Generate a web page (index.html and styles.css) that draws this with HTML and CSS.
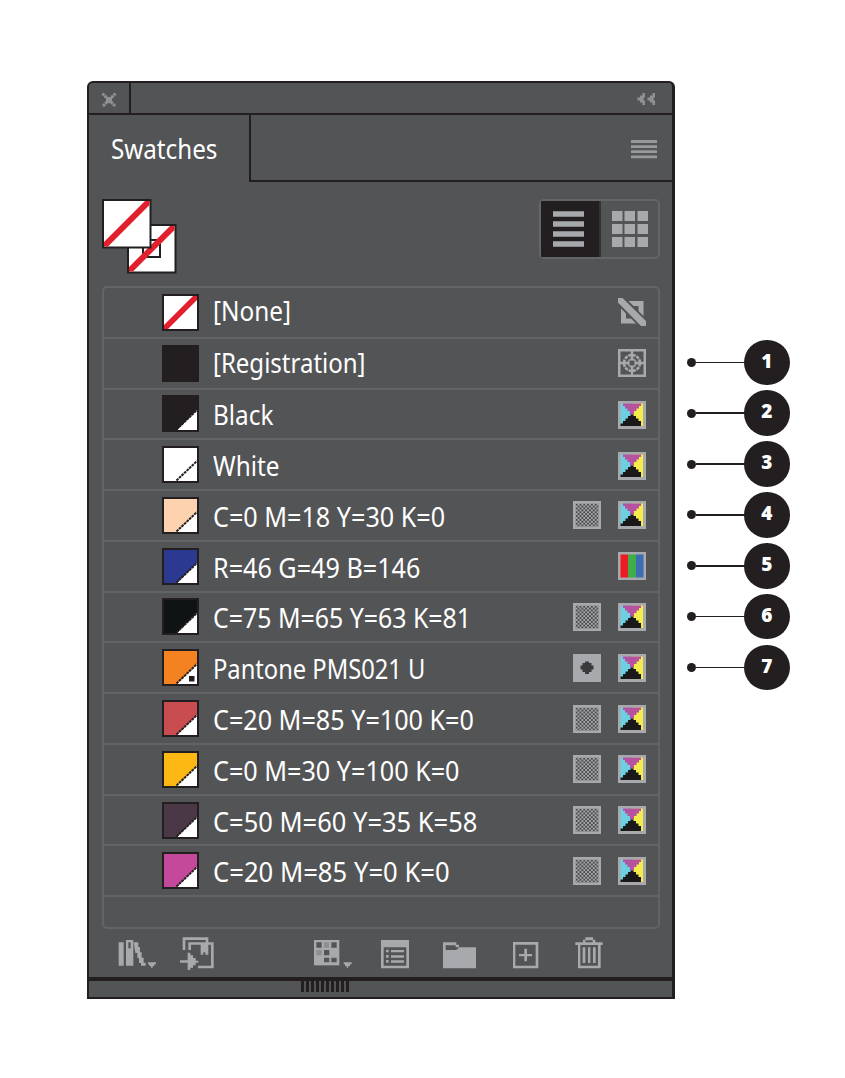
FILE: index.html
```
<!doctype html>
<html lang="en">
<head>
	<meta charset="UTF-8">
	<title>Swatches</title>
	<link rel="stylesheet" href="styles.css">
</head>
<body>
<svg class="defs">
	<symbol id="none" viewBox="0 0 37 37">
		<rect width="37" height="37" fill="#231f20"/>
		<rect x="2" y="2" width="33" height="33" fill="#fff"/>
		<path d="M2 35v-4L31 2h4v4L6 35z" fill="#e11f2d"/>
	</symbol>
	<symbol id="chip" viewBox="0 0 37 37">
		<rect width="37" height="37" fill="#231f20"/>
		<rect x="2" y="2" width="33" height="33" fill="currentColor"/>
		<path d="M15 35L35 15V35z" fill="#fff"/>
		<path d="M14.500 34.500L35 15" fill="none" stroke="#231f20" stroke-width="2" stroke-dasharray="2.700 .8"/>
	</symbol>
	<symbol id="cmyk" viewBox="0 0 28 28">
		<rect width="28" height="28" fill="#a7a9ac"/>
		<path d="M2.500 2.500H14V25H2.500z" fill="#6dcfe0"/>
		<path d="M14 2.500h11V25H14z" fill="#f5ec4b"/>
		<path d="M5 2.500h18V5h-2v2.500h-2.500V10H16v3.500h-4V10H9.500V7.500H7V5H5z" fill="#b653a0"/>
		<path d="M2.500 25v-2.500H5V20h2.500v-2.500H10V15h2.500v-1.500h3V15H18v2.500h2.500V20H23v5z" fill="#1a1818"/>
	</symbol>
	<pattern id="dots" x="2.700" y="2.700" width="3.800" height="3.800" patternUnits="userSpaceOnUse">
		<path d="M0 0h1.900v1.900H0zM1.900 1.900h1.900v1.900H1.900z" fill="#4a4b4d"/>
	</pattern>
	<symbol id="tint" viewBox="0 0 28 28">
		<rect width="28" height="28" fill="#a7a9ac"/>
		<rect x="2.700" y="2.700" width="22.800" height="22.800" fill="url(#dots)"/>
	</symbol>
	<symbol id="spot" viewBox="0 0 28 28">
		<rect width="28" height="28" fill="#a7a9ac"/>
		<path d="M12 7.500h4V9h2.500v2.500h2v4h-2V18H16v2h-4v-2H9.500v-2.500h-2v-4h2V9H12z" fill="#3a3a3c"/>
	</symbol>
	<symbol id="rgb" viewBox="0 0 28 28">
		<rect width="28" height="28" fill="#a7a9ac"/>
		<path d="M2.500 2.500H10V25.500H2.500z" fill="#ed1c24"/>
		<path d="M10 2.500h8V25.500h-8z" fill="#3fae49"/>
		<path d="M18 2.500h7.500V25.500H18z" fill="#3b6db5"/>
	</symbol>
	<symbol id="locked" viewBox="0 0 28 28">
		<path d="M3 3h22.500v22.500H3zM8 8v12.500h12.500V8z" fill="#a7a9ac" fill-rule="evenodd"/>
		<path d="M0 0h7.500L28 20.500V28h-7.500L0 7.500z" fill="#535456"/>
		<path d="M0 0h4.500L28 23v5h-5L0 4.500z" fill="#a7a9ac"/>
	</symbol>
	<symbol id="target" viewBox="0 0 28 28" fill="none" stroke="#a7a9ac">
		<rect x="1.250" y="1.250" width="25.500" height="25.500" stroke-width="2.500"/>
		<path d="M14 2v9.500M14 16.500V26M2 14h9.500M16.500 14H26" stroke-width="2.400"/>
		<circle cx="14" cy="14" r="8" stroke-width="2.600" stroke-dasharray="3.300 .9"/>
		<circle cx="14" cy="14" r="3.800" stroke-width="2" stroke-opacity=".8"/>
	</symbol>
</svg>

<div class="page">
	<div class="panel">
		<div class="titlebar">
			<div class="close">
				<svg width="16" height="16" viewBox="0 0 16 16"><path d="M1.500 1.500l13 13M14.500 1.500l-13 13" stroke="#8f9193" stroke-width="3" stroke-dasharray="2.400 .6"/><rect x="5" y="5" width="6" height="6" fill="#8f9193"/></svg>
			</div>
			<svg class="collapse" width="19" height="14" viewBox="0 0 19 14"><path d="M5.500 1H8v4L6 7l2 2v4H5.500v-2.500H3V8.500H.5v-3H3V3.500h2.500zM15.500 1H18v4l-2 2 2 2v4h-2.500v-2.500H13V8.500h-2.500v-3H13V3.500h2.500z" fill="#8f9193"/></svg>
		</div>
		<div class="tabs">
			<div class="tab"><span>Swatches</span></div>
			<div class="tabfill">
				<svg width="26" height="19" viewBox="0 0 26 19"><path d="M0 1.500h26M0 6.700h26M0 11.700h26M0 16.800h26" stroke="#97999b" stroke-width="2.800"/></svg>
			</div>
		</div>
		<div class="tools">
			<svg width="75" height="75" viewBox="0 0 75 75">
				<path d="M25 25h49.500v49.500H25z" fill="#231f20"/>
				<path d="M27 27h45.500v45.500H27z" fill="#fff"/>
				<path d="M41 41h17v17H41z" fill="none" stroke="#231f20" stroke-width="2"/>
				<path d="M27 72.500V68l41-41h4.500v4L31 72.500z" fill="#e11f2d"/>
				<path d="M0 0h49.500v49.500H0z" fill="#231f20"/>
				<path d="M2 2h45.500v45.500H2z" fill="#fff"/>
				<path d="M2 47.500V43L43 2h4.500v4L6 47.500z" fill="#e11f2d"/>
			</svg>
			<div class="views">
				<div class="view on"><svg width="31" height="36" viewBox="0 0 31 36"><path d="M0 3h31M0 13h31M0 23h31M0 33h31" stroke="#a7a9ac" stroke-width="5.400"/></svg></div>
				<div class="view"><svg width="36" height="36" viewBox="0 0 36 36"><path d="M0 5h10.500M12.500 5H23M25.500 5H36M0 18h10.500M12.500 18H23M25.500 18H36M0 31h10.500M12.500 31H23M25.500 31H36" stroke="#a7a9ac" stroke-width="10"/></svg></div>
			</div>
		</div>
		<ul class="list">
			<li class="none"><svg class="chip"><use href="#none"/></svg><span>[None]</span><svg class="ico"><use href="#locked"/></svg></li>
			<li class="reg"><svg class="chip"><rect width="37" height="37" fill="#231f20"/></svg><span>[Registration]</span><svg class="ico"><use href="#target"/></svg></li>
			<li class="black"><svg class="chip"><use href="#chip"/></svg><span>Black</span><svg class="ico"><use href="#cmyk"/></svg></li>
			<li class="white"><svg class="chip"><use href="#chip"/></svg><span>White</span><svg class="ico"><use href="#cmyk"/></svg></li>
			<li class="peach"><svg class="chip"><use href="#chip"/></svg><span>C=0 M=18 Y=30 K=0</span><svg class="ico"><use href="#tint"/></svg><svg class="ico"><use href="#cmyk"/></svg></li>
			<li class="blue"><svg class="chip"><use href="#chip"/></svg><span>R=46 G=49 B=146</span><svg class="ico"><use href="#rgb"/></svg></li>
			<li class="rich"><svg class="chip"><use href="#chip"/></svg><span>C=75 M=65 Y=63 K=81</span><svg class="ico"><use href="#tint"/></svg><svg class="ico"><use href="#cmyk"/></svg></li>
			<li class="pantone"><svg class="chip"><use href="#chip"/><rect x="27" y="27" width="5.500" height="5.500" fill="#231f20"/></svg><span>Pantone PMS021 U</span><svg class="ico"><use href="#spot"/></svg><svg class="ico"><use href="#cmyk"/></svg></li>
			<li class="red"><svg class="chip"><use href="#chip"/></svg><span>C=20 M=85 Y=100 K=0</span><svg class="ico"><use href="#tint"/></svg><svg class="ico"><use href="#cmyk"/></svg></li>
			<li class="yellow"><svg class="chip"><use href="#chip"/></svg><span>C=0 M=30 Y=100 K=0</span><svg class="ico"><use href="#tint"/></svg><svg class="ico"><use href="#cmyk"/></svg></li>
			<li class="plum"><svg class="chip"><use href="#chip"/></svg><span>C=50 M=60 Y=35 K=58</span><svg class="ico"><use href="#tint"/></svg><svg class="ico"><use href="#cmyk"/></svg></li>
			<li class="pink"><svg class="chip"><use href="#chip"/></svg><span>C=20 M=85 Y=0 K=0</span><svg class="ico"><use href="#tint"/></svg><svg class="ico"><use href="#cmyk"/></svg></li>
		</ul>
		<div class="footer">
			<svg class="library" viewBox="114 140 117 102">
				<path d="M116 156h15v70h-15zM138 149h22v77h-22z"/>
				<path d="M145 156h7v18h-7z" fill="#535456"/>
				<path d="M161 156h14v14h5v16h5v16h6v15h6v9h-14v-8h-6v-15h-5v-15h-6z"/>
				<path d="M204 216h24v6h-5v5h-5v5h-5v-5h-5v-5h-4z"/>
			</svg>
			<svg class="import" viewBox="300 140 108 102">
				<path d="M308 141h77v15h16v78h-47v-8h39v-63h-8v30h-9v-7h-6v7h-8v-30h-29v16h-8v-23h52v-7h-61v30h-8z"/>
				<path d="M300 210h23v-23h8v8h8v8h8v8h8v6h-8v8h-8v7h-8v7h-8v-22h-23z"/>
			</svg>
			<svg class="groups" viewBox="699 140 117 102">
				<path d="M702 149h76v76h-76z"/>
				<path d="M709 156h16v16h-16zM754 156h16v16h-16zM732 179h16v16h-16zM732 202h16v14h-16zM754 202h16v14h-16z" fill="#535456"/>
				<path d="M732 156h15v16h-15zM709 179h16v16h-16z" fill="#8d8f91"/>
				<path d="M791 216h24v6h-5v5h-5v5h-5v-5h-5v-5h-4z"/>
			</svg>
			<svg class="options" viewBox="60 140 90 102">
				<path d="M63 149h84v85H63zM71 171v55h68v-55z" fill-rule="evenodd"/>
				<path d="M78 178h8v8h-8zM93 179h39v7H93zM78 194h8v8h-8zM93 195h39v7H93zM78 209h8v8h-8zM93 210h39v7H93z"/>
			</svg>
			<svg class="folder" viewBox="249 140 99 102">
				<path d="M249 156h40v7h8v8h51v63h-99zM257 165v14h31l8-5v-3h-9v-6z" fill-rule="evenodd"/>
			</svg>
			<svg class="add" viewBox="459 140 78 102">
				<path d="M459 155h76v79h-76zM466 163v63h61v-63z" fill-rule="evenodd"/>
				<path d="M493 175h8v16h15v7h-15v15h-8v-15h-16v-7h16z"/>
			</svg>
			<svg class="trash" viewBox="645 140 84 102">
				<path d="M669 156v-8h7v-7h23v7h7v8h22v8h-6v70h-68v-70h-8v-8zM676 150v6h22v-6zM661 164v62h53v-62z" fill-rule="evenodd"/>
				<path d="M668 171h8v47h-8zM684 171h7v47h-7zM699 171h8v47h-8z"/>
			</svg>
		</div>
		<div class="grip"><i></i></div>
	</div>

	<ol class="callouts">
		<li><b>1</b></li>
		<li><b>2</b></li>
		<li><b>3</b></li>
		<li><b>4</b></li>
		<li><b>5</b></li>
		<li><b>6</b></li>
		<li><b>7</b></li>
	</ol>
</div>
</body>
</html>
```
FILE: styles.css
```
* {
	margin: 0;
	padding: 0;
	box-sizing: border-box;
}
body {
	background: #fff;
	font-family: "Noto Sans", "Open Sans", sans-serif;
}
ul, ol {
	list-style: none;
}
svg {
	display: block;
	flex: none;
}
.defs {
	position: absolute;
	width: 0;
	height: 0;
}

.page {
	display: flex;
	height: 1078px;
	padding: 81px 0 0 87px;
}
.panel {
	display: flex;
	flex-direction: column;
	width: 588px;
	height: 918px;
	border: 2px solid #231f20;
	border-right-width: 3px;
	border-radius: 6px 6px 0 0;
	background: #535456;
}

.titlebar {
	display: flex;
	align-items: center;
	justify-content: space-between;
	height: 32px;
	padding-right: 16px;
	border-bottom: 2px solid #231f20;
}
.close {
	width: 42px;
	height: 30px;
	padding: 9px 0 0 12px;
	border-right: 2px solid #231f20;
}
.collapse {
	margin-top: 2px;
}
.tabs {
	display: flex;
	height: 67px;
}
.tab {
	width: 160px;
	padding: 12px 0 0 22px;
	font-size: 28px;
	line-height: 42px;
	color: #fff;
}
.tab span, .list span {
	display: inline-block;
	transform: scaleX(.915);
	transform-origin: 0 50%;
	white-space: nowrap;
}
.tab span {
	transform: scaleX(.864);
}
.tabfill {
	display: flex;
	flex: 1;
	justify-content: flex-end;
	padding: 25px 15px 0 0;
	border-left: 2px solid #231f20;
	border-bottom: 2px solid #231f20;
}

.tools {
	display: flex;
	justify-content: space-between;
	height: 104px;
	padding: 17px 12.5px 0 13px;
}
.views {
	display: flex;
	width: 121px;
	height: 60px;
	border: 2px solid #646567;
	border-radius: 5px;
}
.view {
	display: flex;
	align-items: center;
	justify-content: center;
	flex: 1;
	padding-left: 2px;
}
.view.on {
	padding: 0 3px 0 0;
	border-right: 2px solid #343334;
	background: #231f20;
}

.list {
	width: 558px;
	height: 643px;
	margin-left: 13px;
	border: 2.5px solid #636466;
	border-radius: 5px;
}
.list li {
	display: flex;
	align-items: center;
	height: 50.77px;
	padding: 0 12.500px 0 57.500px;
	border-bottom: 2.5px solid #636466;
}
.list span {
	flex: 1;
	margin-left: 14px;
	padding-top: 3px;
	font-size: 27.500px;
	line-height: 36px;
	color: #fff;
}
.list .none span {
	padding: 0 0 3px;
	transform: scaleX(.885);
}
.list .reg span {
	padding: 0;
	transform: scaleX(.873);
}
.list .black span, .list .white span {
	transform: scaleX(.885);
}
.list .rich span {
	transform: scaleX(.905);
}
.list .pantone span {
	transform: scaleX(.862);
}
.list .plum span {
	transform: scaleX(.927);
}
.list .pink span {
	transform: scaleX(.933);
}
.chip {
	width: 37px;
	height: 37px;
}
.ico {
	width: 28px;
	height: 28px;
	margin-left: 17px;
}
.black .ico, .white .ico {
	margin-top: 2px;
}
.black .chip {
	color: #231f20;
}
.white .chip {
	color: #fff;
}
.peach .chip {
	color: #fcd3ae;
}
.blue .chip {
	color: #2b3990;
}
.rich .chip {
	color: #101314;
}
.pantone .chip {
	color: #f58220;
}
.red .chip {
	color: #c94c51;
}
.yellow .chip {
	color: #fdb813;
}
.plum .chip {
	color: #4a3846;
}
.pink .chip {
	color: #c4499b;
}

.footer {
	display: flex;
	height: 48px;
	padding: 7.500px 0 0 29px;
}
.footer svg {
	height: 34px;
	fill: #a7a9ac;
}
.footer .library {
	width: 39px;
}
.footer .import {
	width: 36px;
	margin-left: 23px;
}
.footer .groups {
	width: 39px;
	margin-left: 97px;
}
.footer .options {
	width: 30px;
	margin-left: 28px;
}
.footer .folder {
	width: 33px;
	margin-left: 33px;
}
.footer .add {
	width: 26px;
	margin-left: 37px;
}
.footer .trash {
	width: 28px;
	margin-left: 36px;
}
.grip {
	flex: 1;
	padding-left: 212px;
	border-top: 4.5px solid #231f20;
}
.grip i {
	display: block;
	width: 48px;
	height: 11px;
	background: repeating-linear-gradient(90deg, #231f20 0, #231f20 3px, #535456 3px, #535456 5px);
}

.callouts {
	padding: 258.500px 0 0 12px;
}
.callouts li {
	display: flex;
	align-items: center;
	height: 45.5px;
	margin-bottom: 5.400px;
}
.callouts li:before {
	content: "";
	width: 9px;
	height: 9px;
	border-radius: 50%;
	background: #231f20;
}
.callouts li:after {
	content: "";
	order: 1;
	width: 48px;
	height: 1.5px;
	background: #231f20;
}
.callouts b {
	order: 2;
	width: 45.500px;
	height: 45.500px;
	border-radius: 50%;
	background: #231f20;
	color: #fff;
	font: 800 19px/43px "Open Sans", sans-serif;
	text-align: center;
}
```
